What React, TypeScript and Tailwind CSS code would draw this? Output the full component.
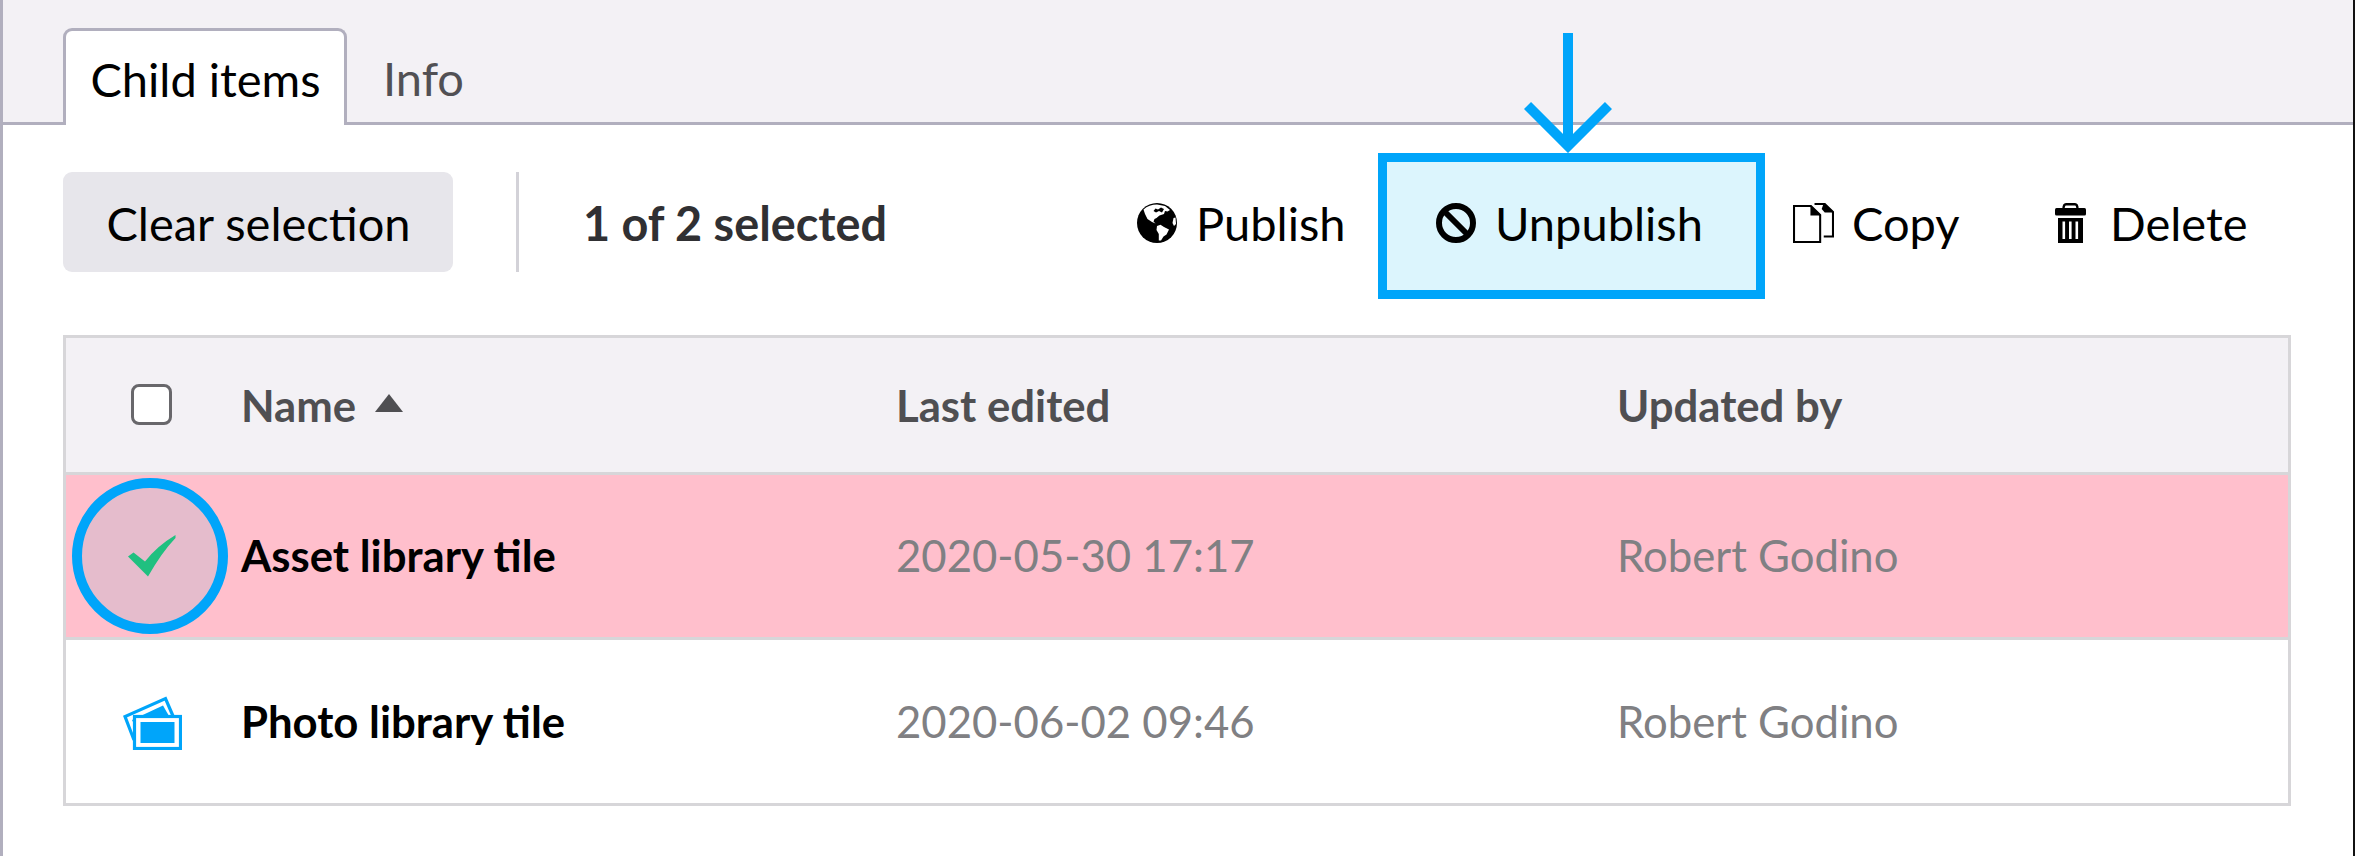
import React from "react";

function Globe() {
  return (
    <svg className="block h-10 w-10" viewBox="0 0 40 40">
      <circle cx="20" cy="20" r="20" fill="#000" />
      <path d="M6.500 6.500C10 3 15 1.500 20 1.500L28 3L33 7L30.500 8.500L28 8L27 11L22.500 12.500L19.500 15L17.500 16L16.500 18.500L18.500 20.500L15 19L10.500 16L8 11Z" fill="#fff" />
      <path d="M16.500 8L18.500 5.500L21 6.500L24 4.500L27 6L25 9.500L22 8L19 9.500Z" fill="#000" />
      <path d="M20 23L23.500 21.700L27 24L32 26.500L29.500 31.500L26.500 33.500L24 37.500H21.800V31L19.500 27Z" fill="#fff" />
      <path d="M36.500 15L38.500 14.500L39 21L37 23L35.500 20Z" fill="#fff" />
    </svg>
  );
}

function Ban() {
  return (
    <svg className="block h-10 w-10" viewBox="0 0 40 40" fill="none" stroke="#000" strokeWidth="6">
      <circle cx="20" cy="20" r="17" />
      <path d="M8 8L32 32" />
    </svg>
  );
}

function Copy() {
  return (
    <svg className="block h-10 w-[41px]" viewBox="0 0 40 40" preserveAspectRatio="none">
      <path d="M1 3H17.500L26.500 12V39H1Z" fill="none" stroke="#000" strokeWidth="2" />
      <path d="M17 2.500L27.500 12.500H17Z" />
      <path d="M21 1H31L39 9V33.500H30" fill="none" stroke="#000" strokeWidth="2" />
      <path d="M30 0L40 9.500H31L28 6Z" />
    </svg>
  );
}

function Trash() {
  return (
    <svg className="block h-10 w-[31px]" viewBox="0 0 31 40">
      <path d="M8.500 6Q8.500 1.200 11 1.200H20Q22.500 1.200 22.500 6" fill="none" stroke="#000" strokeWidth="2.400" />
      <rect y="5" width="31" height="7.500" rx="1.500" />
      <rect x="3" y="15" width="25" height="25" />
      <path d="M8.800 18.500V36M15.300 18.500V36M21.800 18.500V36" stroke="#fff" strokeWidth="2.600" />
    </svg>
  );
}

function Photos() {
  return (
    <svg className="block h-[54px] w-[59px]" viewBox="0 0 59 54">
      <path d="M11 44L2 20.500L42.500 2.500L50 20" fill="none" stroke="#00a5fa" strokeWidth="3.200" />
      <path d="M9 24L40 9.500L46 20L10 26Z" fill="#00a5fa" />
      <rect x="11.500" y="20.500" width="46" height="32" fill="#fff" stroke="#00a5fa" strokeWidth="3.200" />
      <rect x="17.500" y="26" width="34" height="21" fill="#00a5fa" />
    </svg>
  );
}

function Check() {
  return (
    <svg className="block h-[42px] w-[48px]" viewBox="0 0 48 42">
      <path d="M0 21.500L5.500 17.500L17 26.500Q29 11 47.500 0V3Q34 17 20 41.500Z" fill="#20c080" />
    </svg>
  );
}

const cols = "grid grid-cols-[175px_655px_721px_1fr] items-center";

export default function App() {
  return (
    <div className="relative flex h-[856px] w-[2355px] flex-col overflow-hidden border-l-3 border-r-2 border-l-[#b1afbe] border-r-[#111] bg-white font-['Lato',sans-serif] text-[47px] leading-none text-black">
      <nav className="flex h-[125px] shrink-0 items-end bg-[#f3f1f5] bg-[linear-gradient(#b1afbe,#b1afbe)] bg-[length:100%_3px] bg-bottom bg-no-repeat pl-[60px]">
        <div className="flex h-[97px] w-[284px] items-center justify-center rounded-t-[9px] border-3 border-b-0 border-[#b1afbe] bg-white pt-[3px] pl-px">Child items</div>
        <div className="flex h-[97px] items-center pt-[3px] pl-[36px] text-[#515054]">Info</div>
      </nav>
      <div className="flex h-[210px] shrink-0 items-start pt-[28px] pl-[60px]">
        <div className="mt-[19px] flex h-[100px] w-[390px] items-center justify-center rounded-[9px] bg-[#e7e6eb] pt-[2px] pl-px">Clear selection</div>
        <div className="mt-[19px] ml-[63px] h-[100px] w-[3px] bg-[#d3d2d8]" />
        <div className="mt-[19px] ml-[64px] flex h-[100px] w-[554px] items-center pt-[2px] text-[46.8px] font-bold text-[#303033]">1 of 2 selected</div>
        <div className="mt-[19px] flex h-[100px] w-[241px] items-center gap-[19px] pt-[2px]"><Globe />Publish</div>
        <div className="relative flex h-[146px] w-[387px] items-center gap-[19px] border-[9px] border-[#00a5fa] bg-[#dcf5fd] pb-[6px] pl-[49px]">
          <Ban />Unpublish
          <svg className="absolute -top-[129px] left-[137px] h-[120px] w-[88px]" viewBox="0 0 88 120" fill="none" stroke="#00a5fa" strokeWidth="10">
            <path d="M44 0V112M3.500 72.500L44 113L84.500 72.500" />
          </svg>
        </div>
        <div className="mt-[19px] ml-[28px] flex h-[100px] w-[262px] items-center gap-[18px] pt-[2px]"><Copy />Copy</div>
        <div className="mt-[19px] flex h-[100px] items-center gap-[24px] pt-[2px]"><Trash />Delete</div>
      </div>
      <div className="ml-[60px] flex h-[471px] w-[2228px] shrink-0 flex-col border-3 border-[#d7d6d9] text-[43.7px]">
        <div className={`${cols} h-[137px] border-b-3 border-[#d7d6d9] bg-[#f3f1f5] font-bold text-[#4f4f52]`}>
          <div className="pb-px pl-[65px]"><div className="h-[41px] w-[41px] rounded-[8px] border-3 border-[#68676b] bg-white" /></div>
          <div className="flex items-center gap-[19px] pt-px">Name
            <svg className="mb-[5px] h-[18px] w-[28px]" viewBox="0 0 28 18"><path d="M14 0L28 18H0Z" fill="#4f4f52" /></svg>
          </div>
          <div className="pt-px">Last edited</div>
          <div className="pt-px">Updated by</div>
        </div>
        <div className={`${cols} h-[165px] border-b-3 border-[#d7d6d9] bg-[#ffbfcc] text-[#808083]`}>
          <div className="pl-[6px]">
            <div className="flex h-[156px] w-[156px] items-center justify-center rounded-full border-[10px] border-[#00a5fa] bg-[#e5bccc] pl-[3px]"><Check /></div>
          </div>
          <div className="font-bold text-black">Asset library tile</div>
          <div>2020-05-30 17:17</div>
          <div>Robert Godino</div>
        </div>
        <div className={`${cols} h-[163px] text-[#808083]`}>
          <div className="pt-[2px] pl-[57px]"><Photos /></div>
          <div className="pt-px font-bold text-black">Photo library tile</div>
          <div className="pt-px">2020-06-02 09:46</div>
          <div className="pt-px">Robert Godino</div>
        </div>
      </div>
    </div>
  );
}
